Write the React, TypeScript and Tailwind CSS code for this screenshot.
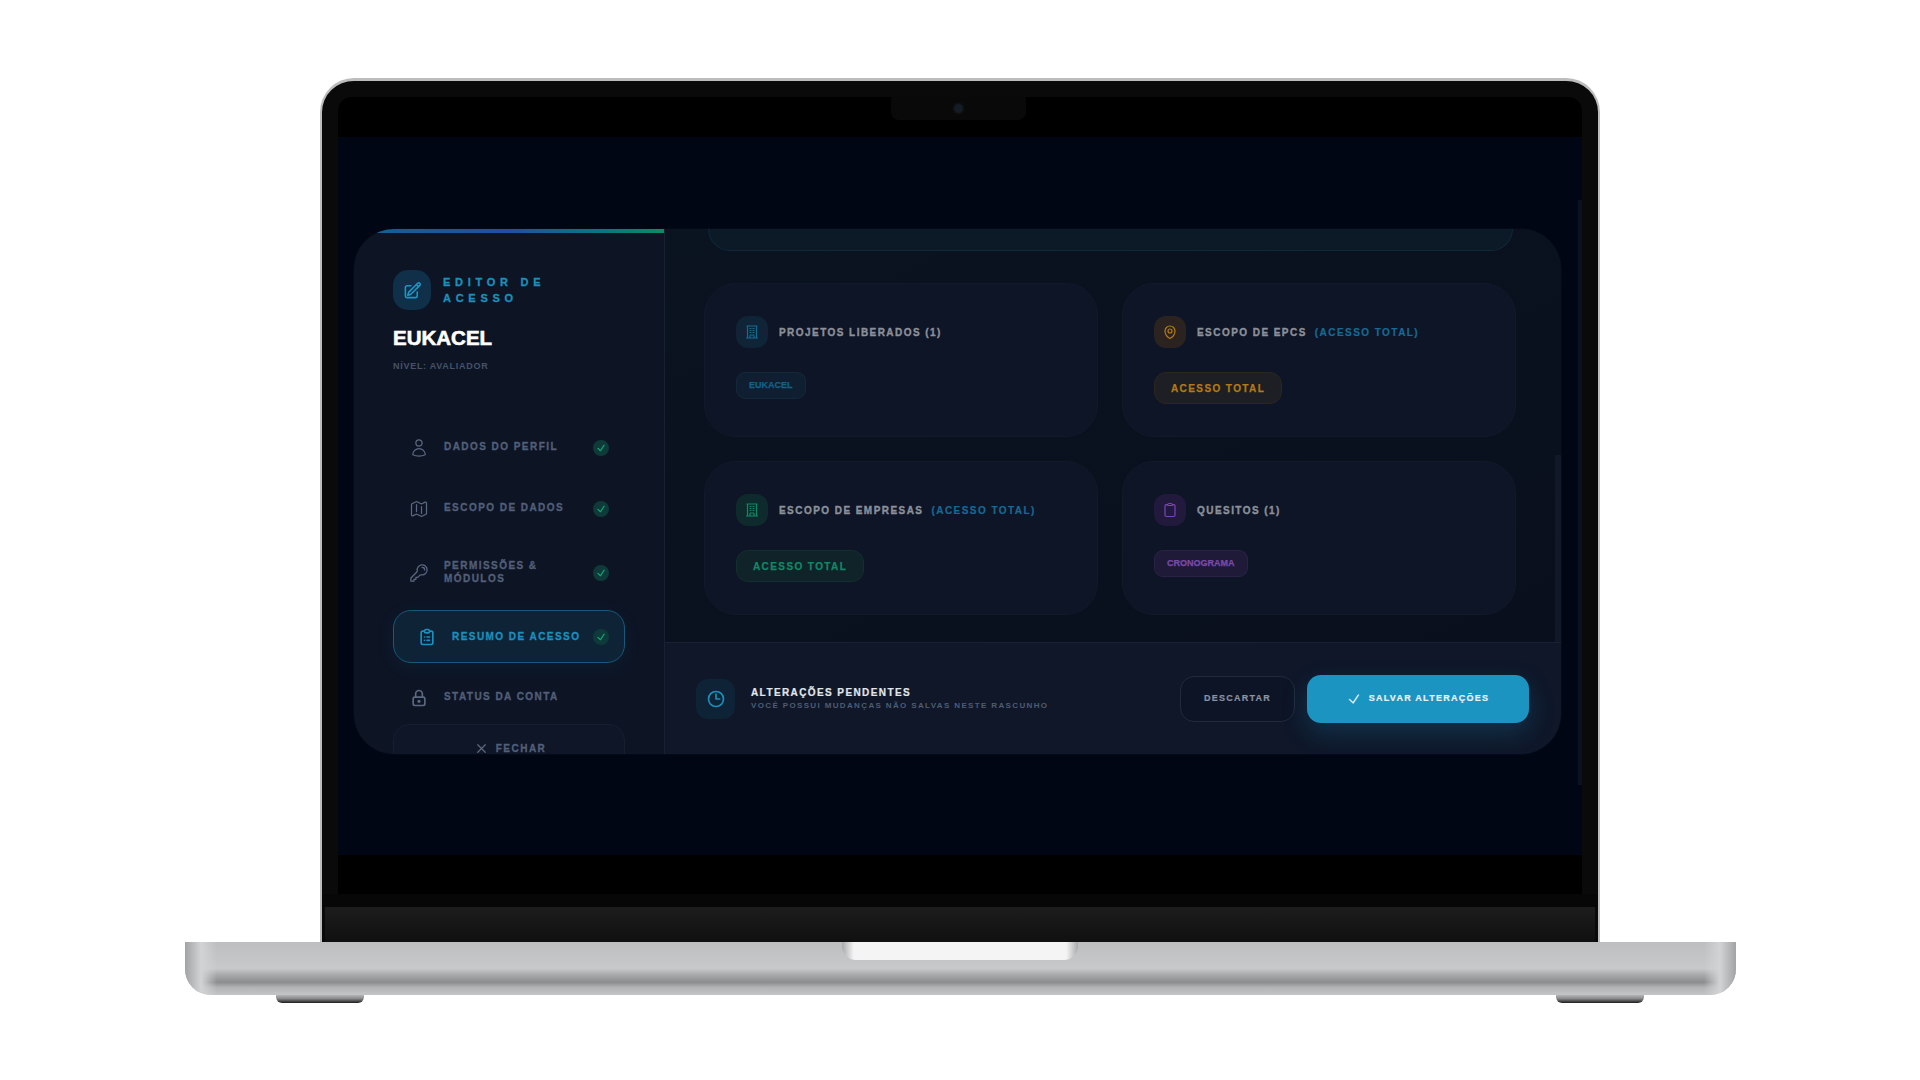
import type { ComponentType, ReactNode } from 'react';
import { HiOutlineClipboardList } from 'react-icons/hi';
import {
  HiCheck,
  HiOutlineBuildingOffice,
  HiOutlineClipboard,
  HiOutlineClock,
  HiOutlineKey,
  HiOutlineMap,
  HiOutlineMapPin,
  HiOutlinePencilSquare,
  HiOutlineUser,
  HiOutlineXMark,
} from 'react-icons/hi2';
import { TbLock } from 'react-icons/tb';

type IconType = ComponentType<{ className?: string }>;

const navItems: { label: string; icon: IconType; height: string; done: boolean; active?: boolean }[] = [
  { label: 'Dados do perfil', icon: HiOutlineUser, height: 'h-[53px]', done: true },
  { label: 'Escopo de dados', icon: HiOutlineMap, height: 'h-[53px]', done: true },
  { label: 'Permissões & módulos', icon: HiOutlineKey, height: 'h-[59px]', done: true },
  { label: 'Resumo de acesso', icon: HiOutlineClipboardList, height: 'h-[53px]', done: true, active: true },
  { label: 'Status da conta', icon: TbLock, height: 'h-[53px]', done: false },
];

function NavItem({ item }: { item: (typeof navItems)[number] }) {
  const Icon = item.icon;
  return (
    <div
      className={
        item.active
          ? `${item.height} flex items-center rounded-[18px] border border-[#155a7c] bg-[#0f2336] pl-[23px] pr-[15px] shadow-[0_4px_18px_rgba(20,110,160,0.08)]`
          : `${item.height} flex items-center pl-[16px] pr-[16px]`
      }
    >
      <Icon className={item.active ? 'size-[20px] shrink-0 text-[#1b8fbd]' : 'size-[20px] shrink-0 text-[#5b6880]'} />
      <span
        className={
          item.active
            ? 'ml-[15px] flex-1 text-[10px] font-bold uppercase leading-[12px] tracking-[0.145em] text-[#1b8fbd] [-webkit-text-stroke:0.3px_#1b8fbd]'
            : 'ml-[15px] w-[125px] flex-1 pr-[20px] text-[10px] font-bold uppercase leading-[12.5px] tracking-[0.145em] text-[#525f78] [-webkit-text-stroke:0.3px_#525f78]'
        }
      >
        {item.label}
      </span>
      {item.done && (
        <span className="flex size-[16px] shrink-0 items-center justify-center rounded-full bg-[#0e3a3a]">
          <HiCheck className="size-[10px] text-[#10a877] [stroke-width:1.5]" />
        </span>
      )}
    </div>
  );
}

function Sidebar() {
  return (
    <aside className="relative h-full w-[311px] shrink-0 overflow-hidden border-r border-[#172131] bg-[#0d1525] px-[39px] pt-[41px]">
      <div className="absolute inset-x-0 top-0 h-[4px] bg-gradient-to-r from-[#14618f] via-[#1f4fa3] to-[#0f8a62]" />
      <div className="flex items-center gap-[12px]">
        <div className="flex h-[40px] w-[38px] items-center justify-center rounded-[15px] bg-[#0f3048]">
          <HiOutlinePencilSquare className="size-[19px] text-[#1b96c6] [stroke-width:2]" />
        </div>
        <div className="w-[130px] text-[11px] font-bold uppercase leading-[16px] tracking-[0.43em] text-[#1b8fbd] [-webkit-text-stroke:0.3px_#1b8fbd]">
          Editor de acesso
        </div>
      </div>
      <div className="mt-[16px] text-[20.5px] font-bold leading-[24px] text-white [-webkit-text-stroke:0.6px_white]">
        EUKACEL
      </div>
      <div className="mt-[10px] text-[9px] font-bold uppercase leading-[12px] tracking-[0.08em] text-[#465268]">
        Nível: Avaliador
      </div>
      <nav className="mt-[49px] flex flex-col gap-[8px]">
        {navItems.map((item) => (
          <NavItem key={item.label} item={item} />
        ))}
      </nav>
      <div className="flex h-[50px] items-start justify-center gap-[7px] rounded-t-[16px] border border-[#161f30] bg-[#0e1627] pl-[2px] pt-[16px]">
        <HiOutlineXMark className="size-[15px] text-[#5b6880] [stroke-width:2]" />
        <span className="text-[10px] font-bold uppercase leading-[16px] tracking-[0.15em] text-[#525f78] [-webkit-text-stroke:0.3px_#525f78]">Fechar</span>
      </div>
    </aside>
  );
}

function ScopeCard({
  title,
  note,
  icon: Icon,
  iconClass,
  children,
}: {
  title: string;
  note?: string;
  icon: IconType;
  iconClass: string;
  children: ReactNode;
}) {
  return (
    <div className="h-[154px] rounded-[32px] border border-[#121a2a] bg-[#0e1526] p-[31px] pt-[32px]">
      <div className="flex items-center gap-[11px]">
        <div className={`flex size-[32px] items-center justify-center rounded-[12px] ${iconClass}`}>
          <Icon className="size-[16px] [stroke-width:1.8]" />
        </div>
        <div className="whitespace-nowrap text-[10px] font-bold uppercase tracking-[0.145em] text-[#8b909a] [-webkit-text-stroke:0.35px_#8b909a]">
          {title}
          {note && <span className="ml-[8px] text-[#166a94] [-webkit-text-stroke:0.2px_#166a94]">{note}</span>}
        </div>
      </div>
      <div className="mt-[24px] flex items-start">{children}</div>
    </div>
  );
}

function SmallChip({ className, children }: { className: string; children: ReactNode }) {
  return (
    <span className={`flex h-[27px] items-center rounded-[9px] border px-[12px] text-[9px] font-bold uppercase [-webkit-text-stroke:0.25px] ${className}`}>
      {children}
    </span>
  );
}

function TotalChip({ className }: { className: string }) {
  return (
    <span className={`flex h-[32px] items-center rounded-[12px] border px-[16px] text-[10px] font-bold uppercase tracking-[0.14em] [-webkit-text-stroke:0.25px] ${className}`}>
      Acesso total
    </span>
  );
}

function Footer() {
  return (
    <div className="flex h-[112px] shrink-0 items-center border-t border-[#172131] bg-[#0f1729] pl-[31px] pr-[32px]">
      <div className="flex h-[40px] w-[39px] items-center justify-center rounded-[12px] bg-[#0f2336]">
        <HiOutlineClock className="size-[20px] text-[#1b8fbd] [stroke-width:2]" />
      </div>
      <div className="ml-[16px] flex-1">
        <div className="text-[10px] font-bold uppercase leading-[14px] tracking-[0.14em] text-[#e2e6ec] [-webkit-text-stroke:0.2px_#e2e6ec]">Alterações pendentes</div>
        <div className="text-[8px] font-bold uppercase leading-[11px] tracking-[0.17em] text-[#505c72]">
          Você possui mudanças não salvas neste rascunho
        </div>
      </div>
      <button className="flex h-[46px] w-[115px] items-center justify-center rounded-[14px] border border-[#222b3d] bg-[#0d1425] text-[9px] font-bold uppercase tracking-[0.14em] text-[#8a92a4] [-webkit-text-stroke:0.2px_#8a92a4]">
        Descartar
      </button>
      <button className="ml-[12px] flex h-[48px] w-[222px] items-center justify-center gap-[8px] rounded-[14px] bg-[#1c94c2] text-[9px] font-bold uppercase tracking-[0.14em] text-[#e8f3f8] shadow-[0_10px_26px_rgba(28,148,194,0.22)] [-webkit-text-stroke:0.2px_#e8f3f8]">
        <HiCheck className="size-[14px] [stroke-width:1]" />
        Salvar alterações
      </button>
    </div>
  );
}

function Modal() {
  return (
    <div className="flex h-[525px] w-[1207px] overflow-hidden rounded-[40px] bg-[#0a111f] shadow-[0_0_0_1px_rgba(255,255,255,0.02)]">
      <Sidebar />
      <main className="flex min-w-0 flex-1 flex-col">
        <div className="relative flex-1 overflow-hidden bg-gradient-to-br from-[#0a1320] to-[#090f1d]">
          <div className="ml-[43px] mr-[48px] h-[22px] rounded-b-[32px] border-x border-b border-[#10283a] bg-[#0c1a28]" />
          <div className="mx-[39px] mr-[45px] mt-[32px] grid grid-cols-2 gap-[24px]">
            <ScopeCard title="Projetos liberados (1)" icon={HiOutlineBuildingOffice} iconClass="bg-[#0f2437] text-[#166a94]">
              <SmallChip className="border-[#13283a] bg-[#0f1f31] text-[#14608a]">Eukacel</SmallChip>
            </ScopeCard>
            <ScopeCard title="Escopo de EPCs" note="(Acesso total)" icon={HiOutlineMapPin} iconClass="bg-[#2a2320] text-[#b47a14]">
              <TotalChip className="border-[#2d261c] bg-[#1d1f24] text-[#b47a14]" />
            </ScopeCard>
            <ScopeCard title="Escopo de empresas" note="(Acesso total)" icon={HiOutlineBuildingOffice} iconClass="bg-[#0f2a2c] text-[#0e8a66]">
              <TotalChip className="border-[#12302f] bg-[#0f2329] text-[#0e8a66]" />
            </ScopeCard>
            <ScopeCard title="Quesitos (1)" icon={HiOutlineClipboard} iconClass="bg-[#221a3c] text-[#7a45b8]">
              <SmallChip className="border-[#2a2245] bg-[#1f1a38] text-[#7a4aa8]">Cronograma</SmallChip>
            </ScopeCard>
          </div>
          <div className="absolute bottom-0 right-0 top-[226px] w-[6px] bg-[#111827]" />
        </div>
        <Footer />
      </main>
    </div>
  );
}

function Base() {
  return (
    <div className="relative h-[53px] w-[1551px] shrink-0 rounded-b-[26px] bg-[linear-gradient(180deg,#bdbec0_0%,#c8c9cb_50%,#a8a9ab_62%,#8c8d8f_76%,#b3b4b6_86%,#c4c5c7_100%)]">
      {/* hinge notch */}
      <div className="absolute left-[657px] top-0 h-[18px] w-[236px] rounded-b-[14px] bg-[linear-gradient(90deg,#a9aaac_0%,#f4f4f5_5%,#f4f4f5_95%,#a9aaac_100%)]" />
      {/* side shading */}
      <div className="absolute inset-y-0 left-0 w-[32px] rounded-bl-[26px] bg-[linear-gradient(90deg,#a2a3a5,#d2d3d5_50%,transparent)]" />
      <div className="absolute inset-y-0 right-0 w-[32px] rounded-br-[26px] bg-[linear-gradient(270deg,#a2a3a5,#d2d3d5_50%,transparent)]" />
    </div>
  );
}

function Foot() {
  return <div className="h-[8px] w-[88px] rounded-b-[6px] bg-[linear-gradient(180deg,#b5b5b7,#8a8a8c_45%,#1c1c1c)]" />;
}

export default function App() {
  return (
    <div className="flex h-[1080px] w-[1920px] flex-col items-center overflow-hidden bg-white pt-[78px] font-['Liberation_Sans',Arial,sans-serif]">
      <div className="relative flex h-[864px] w-[1280px] shrink-0 flex-col rounded-t-[34px] border-x-[2px] border-t-[3px] border-[#bdbdbd] bg-[#0a0a0a]">
        <div className="mx-[16px] mt-[16px] flex min-h-0 flex-1 flex-col overflow-hidden rounded-t-[14px] bg-black">
          <div className="relative h-[40px] shrink-0">
            <div className="absolute left-[553px] top-0 flex h-[23px] w-[135px] items-center justify-center rounded-b-[8px] bg-[#090909]">
              <div className="size-[9px] rounded-full bg-[#141c26] shadow-[0_0_0_2px_#0e0e0e]" />
            </div>
          </div>
          <div className="relative h-[718px] shrink-0 bg-[#010614] pl-[16px] pt-[92px]">
            <Modal />
            <div className="absolute bottom-[70px] right-0 top-[63px] w-[4px] bg-[#0a1120]" />
          </div>
          <div className="flex-1" />
        </div>
        <div className="h-[13px] shrink-0 bg-[#070707]" />
        <div className="mx-[3px] h-[35px] shrink-0 bg-gradient-to-b from-[#1d1d1d] to-[#101010]" />
      </div>
      <Base />
      <div className="flex w-[1368px] justify-between">
        <Foot />
        <Foot />
      </div>
    </div>
  );
}
